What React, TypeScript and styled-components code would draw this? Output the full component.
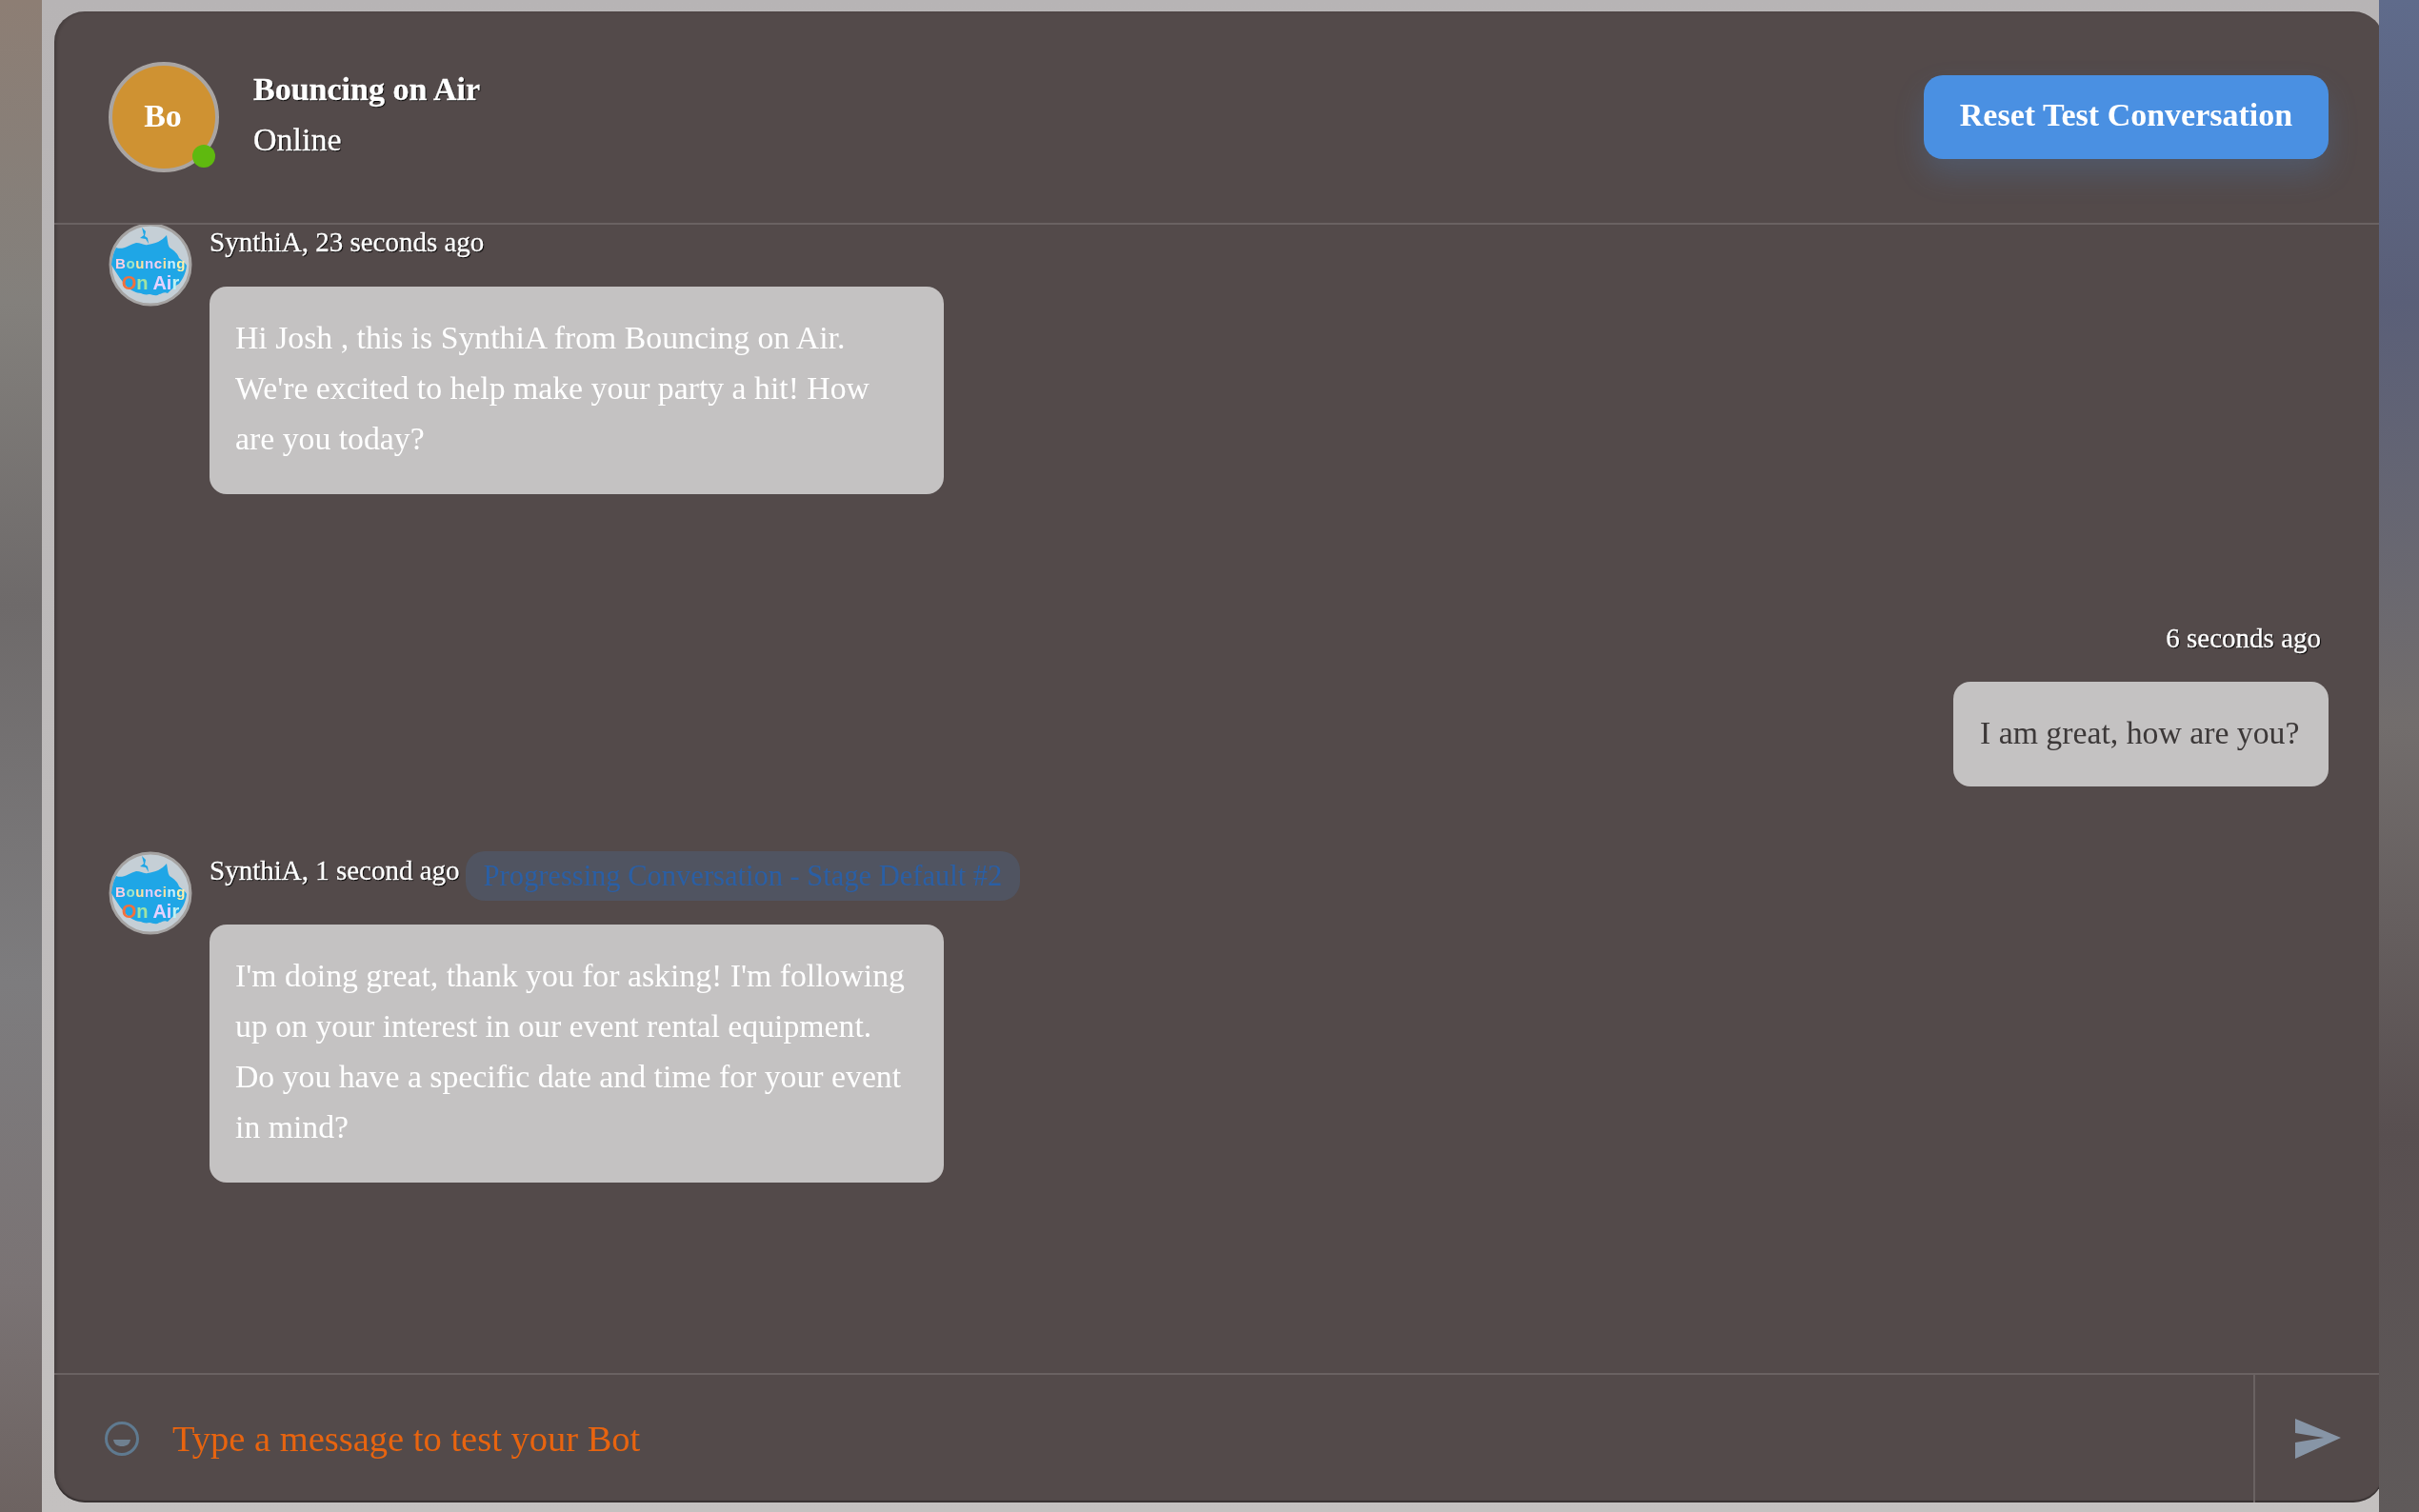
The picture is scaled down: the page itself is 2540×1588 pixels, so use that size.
import * as React from 'react';
import styled, { createGlobalStyle } from 'styled-components';

const GlobalStyle = createGlobalStyle`
  html, body {
    margin: 0;
    padding: 0;
    background: #b9b6b6;
  }
  body {
    font-family: "Liberation Serif", "Times New Roman", serif;
  }
`;

// the reference is a soft, slightly blurred capture
const Page = styled.div`
  display: grid;
  grid-template-columns: 44px 1fr 42px;
  width: 2540px;
  height: 1588px;
  overflow: hidden;
  filter: blur(0.6px);
`;

const LeftStrip = styled.div`
  background: linear-gradient(180deg, #8d7e74 0%, #83807c 20%, #6e6a6a 40%, #7d7c7e 65%, #7a7374 85%, #6d6361 100%);
`;

const RightStrip = styled.div`
  background: linear-gradient(180deg, #5f6b8b 0%, #5a5f78 20%, #726d6c 48%, #584f50 75%, #5f5a5a 100%);
`;

const Stage = styled.div`
  min-width: 0;
  padding: 12px 0 10px 13px;
  background: linear-gradient(180deg, #b7b4b5 0%, #c4c1c0 100%);
  overflow: hidden;
`;

const Card = styled.div`
  display: flex;
  flex-direction: column;
  width: 2446px;
  height: 1566px;
  background: #534a4a;
  border-radius: 32px;
  box-shadow: inset 3px 0 3px rgba(0, 0, 0, 0.14), inset 0 -2px 1px rgba(0, 0, 0, 0.3);
  overflow: hidden;
`;

const Header = styled.header`
  display: flex;
  align-items: center;
  flex: none;
  height: 224px;
  padding: 0 58px 0 57px;
  border-bottom: 2px solid #6a6262;
  box-sizing: border-box;
`;

const AvatarWrap = styled.div`
  position: relative;
  width: 116px;
  height: 116px;
  flex: none;
`;

const Avatar = styled.div`
  display: flex;
  align-items: center;
  justify-content: center;
  width: 100%;
  height: 100%;
  box-sizing: border-box;
  padding: 0 2px 3px 0;
  border: 4px solid #a9a5a3;
  border-radius: 50%;
  background: #cf9232;
  color: #fff;
  font-size: 34px;
  font-weight: 700;
`;

const OnlineDot = styled.span`
  position: absolute;
  right: 4px;
  bottom: 5px;
  width: 24px;
  height: 24px;
  border-radius: 50%;
  background: #5fb90f;
`;

const HeaderInfo = styled.div`
  display: flex;
  flex-direction: column;
  gap: 15px;
  margin: 0 0 5px 36px;
  color: #fff;
  text-shadow: 1px 1px 1px #000;
  -webkit-text-stroke: 0.3px #fff;
`;

const Title = styled.div`
  font-size: 34px;
  line-height: 38px;
  font-weight: 700;
`;

const Status = styled.div`
  font-size: 34px;
  line-height: 38px;
`;

const ResetButton = styled.button`
  margin-left: auto;
  width: 425px;
  height: 88px;
  padding: 0 0 4px;
  border: 0;
  border-radius: 20px;
  background: #4a90e2;
  color: #fff;
  font-family: inherit;
  font-size: 34px;
  font-weight: 700;
  box-shadow: 0 16px 32px rgba(74, 144, 226, 0.2);
`;

const Messages = styled.main`
  display: flex;
  flex-direction: column;
  flex: 1;
  min-height: 0;
  padding: 0 58px 0 57px;
  overflow: hidden;
`;

const Row = styled.div<{ $gap: number }>`
  display: flex;
  gap: 18px;
  margin-top: ${props => props.$gap}px;
`;

const OutRow = styled.div<{ $gap: number }>`
  display: flex;
  flex-direction: column;
  align-items: flex-end;
  margin-top: ${props => props.$gap}px;
`;

const LogoWrap = styled.div`
  width: 88px;
  height: 88px;
  flex: none;
`;

const MessageBody = styled.div`
  display: flex;
  flex-direction: column;
  align-items: flex-start;
`;

const MetaLine = styled.div`
  display: flex;
  align-items: flex-start;
  gap: 6px;
  min-height: 67px;
`;

const Meta = styled.span`
  color: #fff;
  font-size: 29px;
  line-height: 40px;
  text-shadow: 1px 1px 1px #000;
  -webkit-text-stroke: 0.3px #fff;
  white-space: nowrap;
`;

const OutMeta = styled(Meta)`
  margin: 0 8px 26px 0;
`;

const Badge = styled.span`
  height: 52px;
  margin-bottom: 25px;
  padding: 0 19px;
  border-radius: 20px;
  background: #505461;
  color: #2a5fa5;
  font-size: 30.5px;
  line-height: 52px;
  white-space: nowrap;
`;

const Bubble = styled.div`
  box-sizing: border-box;
  width: 771px;
  padding: 27px 35px 32px 27px;
  border-radius: 18px;
  background: #c4c2c2;
  color: #fff;
  font-size: 33.75px;
  line-height: 53px;
`;

const OutBubble = styled(Bubble)`
  width: 394px;
  height: 110px;
  padding-left: 28px;
  color: #3c3838;
  white-space: nowrap;
`;

const Footer = styled.footer`
  display: flex;
  flex: none;
  height: 136px;
  border-top: 2px solid #6a6262;
  box-sizing: border-box;
`;

const InputArea = styled.div`
  display: flex;
  align-items: center;
  flex: 1;
  gap: 34px;
  padding-left: 52px;
  border-right: 2px solid #6a6262;
`;

const Placeholder = styled.span`
  color: #e8640f;
  font-size: 38.5px;
`;

const SendArea = styled.div`
  display: flex;
  align-items: center;
  flex: none;
  width: 135px;
  padding-left: 41px;
  box-sizing: border-box;
`;

function SmileIcon() {
  return (
    <svg width="38" height="38" viewBox="0 0 38 38" fill="none">
      <circle cx="19" cy="19" r="16.5" stroke="#5f7a90" strokeWidth="3" />
      <path d="M10 20h18c-1 5-4 7-9 7s-8-2-9-7z" fill="#6f8090" />
    </svg>
  );
}

function SendIcon() {
  return (
    <svg width="50" height="44" viewBox="0 0 50 44">
      <path d="M1 1l48 20L1 43V26l30-5L1 16z" fill="#8795a6" />
    </svg>
  );
}

const LOGO_TOP = [
  ['B', '#fbd0e4'],
  ['o', '#9fe6c8'],
  ['u', '#fde3a0'],
  ['n', '#d9ccff'],
  ['c', '#fbd0e4'],
  ['i', '#fde3a0'],
  ['n', '#c8f0ff'],
  ['g', '#fff0a8'],
];

const LOGO_BOTTOM = [
  ['O', '#f2703c'],
  ['n', '#9fe3a4'],
  [' ', '#fff'],
  ['A', '#e5d2ff'],
  ['i', '#e5d2ff'],
  ['r', '#bff0f2'],
];

// bot picture: grey disc, blue splash and the name in pastel letters
function BotLogo() {
  return (
    <svg width="88" height="88" viewBox="0 0 88 88">
      <circle cx="44" cy="44" r="42" fill="#c5cfd6" stroke="#a5a3a2" strokeWidth="3" />
      <path
        d="M3 44c1-7 2-13 5-18 7 3 14-3 21-5 5 0 8 3 12 2 8-1 15-4 20-10 1 5 1 10 3 13 5 3 9 7 10 11 3 3 7 5 8 8-1 8-4 14-8 19-4 2-8 6-12 10-4-2-6 1-9 1-4 3-7 0-10 0-4 1-7 0-9-1-5 0-9-3-13-5-7-7-12-15-18-25z"
        fill="#1fa6e6"
      />
      <path d="M35 5l2 8-4 3 6 1 3 5-1-6-3-2 1-5z" fill="#1fa6e6" />
      <text x="44" y="48" textAnchor="middle" fontFamily="Liberation Sans, sans-serif" fontSize="15" fontWeight="700" letterSpacing="0.6">
        {LOGO_TOP.map(([c, fill], i) => <tspan key={i} fill={fill}>{c}</tspan>)}
      </text>
      <text x="44" y="70" textAnchor="middle" fontFamily="Liberation Sans, sans-serif" fontSize="20" fontWeight="700">
        {LOGO_BOTTOM.map(([c, fill], i) => <tspan key={i} fill={fill}>{c}</tspan>)}
      </text>
    </svg>
  );
}

export default function App() {
  return (
    <>
      <GlobalStyle />
      <Page>
        <LeftStrip />
        <Stage>
          <Card>
            <Header>
              <AvatarWrap>
                <Avatar>Bo</Avatar>
                <OnlineDot />
              </AvatarWrap>
              <HeaderInfo>
                <Title>Bouncing on Air</Title>
                <Status>Online</Status>
              </HeaderInfo>
              <ResetButton>Reset Test Conversation</ResetButton>
            </Header>
            <Messages>
              <Row $gap={-2}>
                <LogoWrap><BotLogo /></LogoWrap>
                <MessageBody>
                  <MetaLine>
                    <Meta>SynthiA, 23 seconds ago</Meta>
                  </MetaLine>
                  <Bubble>
                    Hi Josh , this is SynthiA from Bouncing on Air. We're excited to help make your party a hit! How are you today?
                  </Bubble>
                </MessageBody>
              </Row>
              <OutRow $gap={131}>
                <OutMeta>6 seconds ago</OutMeta>
                <OutBubble>I am great, how are you?</OutBubble>
              </OutRow>
              <Row $gap={68}>
                <LogoWrap><BotLogo /></LogoWrap>
                <MessageBody>
                  <MetaLine>
                    <Meta>SynthiA, 1 second ago</Meta>
                    <Badge>Progressing Conversation - Stage Default #2</Badge>
                  </MetaLine>
                  <Bubble>
                    I'm doing great, thank you for asking! I'm following up on your interest in our event rental equipment. Do you have a specific date and time for your event in mind?
                  </Bubble>
                </MessageBody>
              </Row>
            </Messages>
            <Footer>
              <InputArea>
                <SmileIcon />
                <Placeholder>Type a message to test your Bot</Placeholder>
              </InputArea>
              <SendArea>
                <SendIcon />
              </SendArea>
            </Footer>
          </Card>
        </Stage>
        <RightStrip />
      </Page>
    </>
  );
}
